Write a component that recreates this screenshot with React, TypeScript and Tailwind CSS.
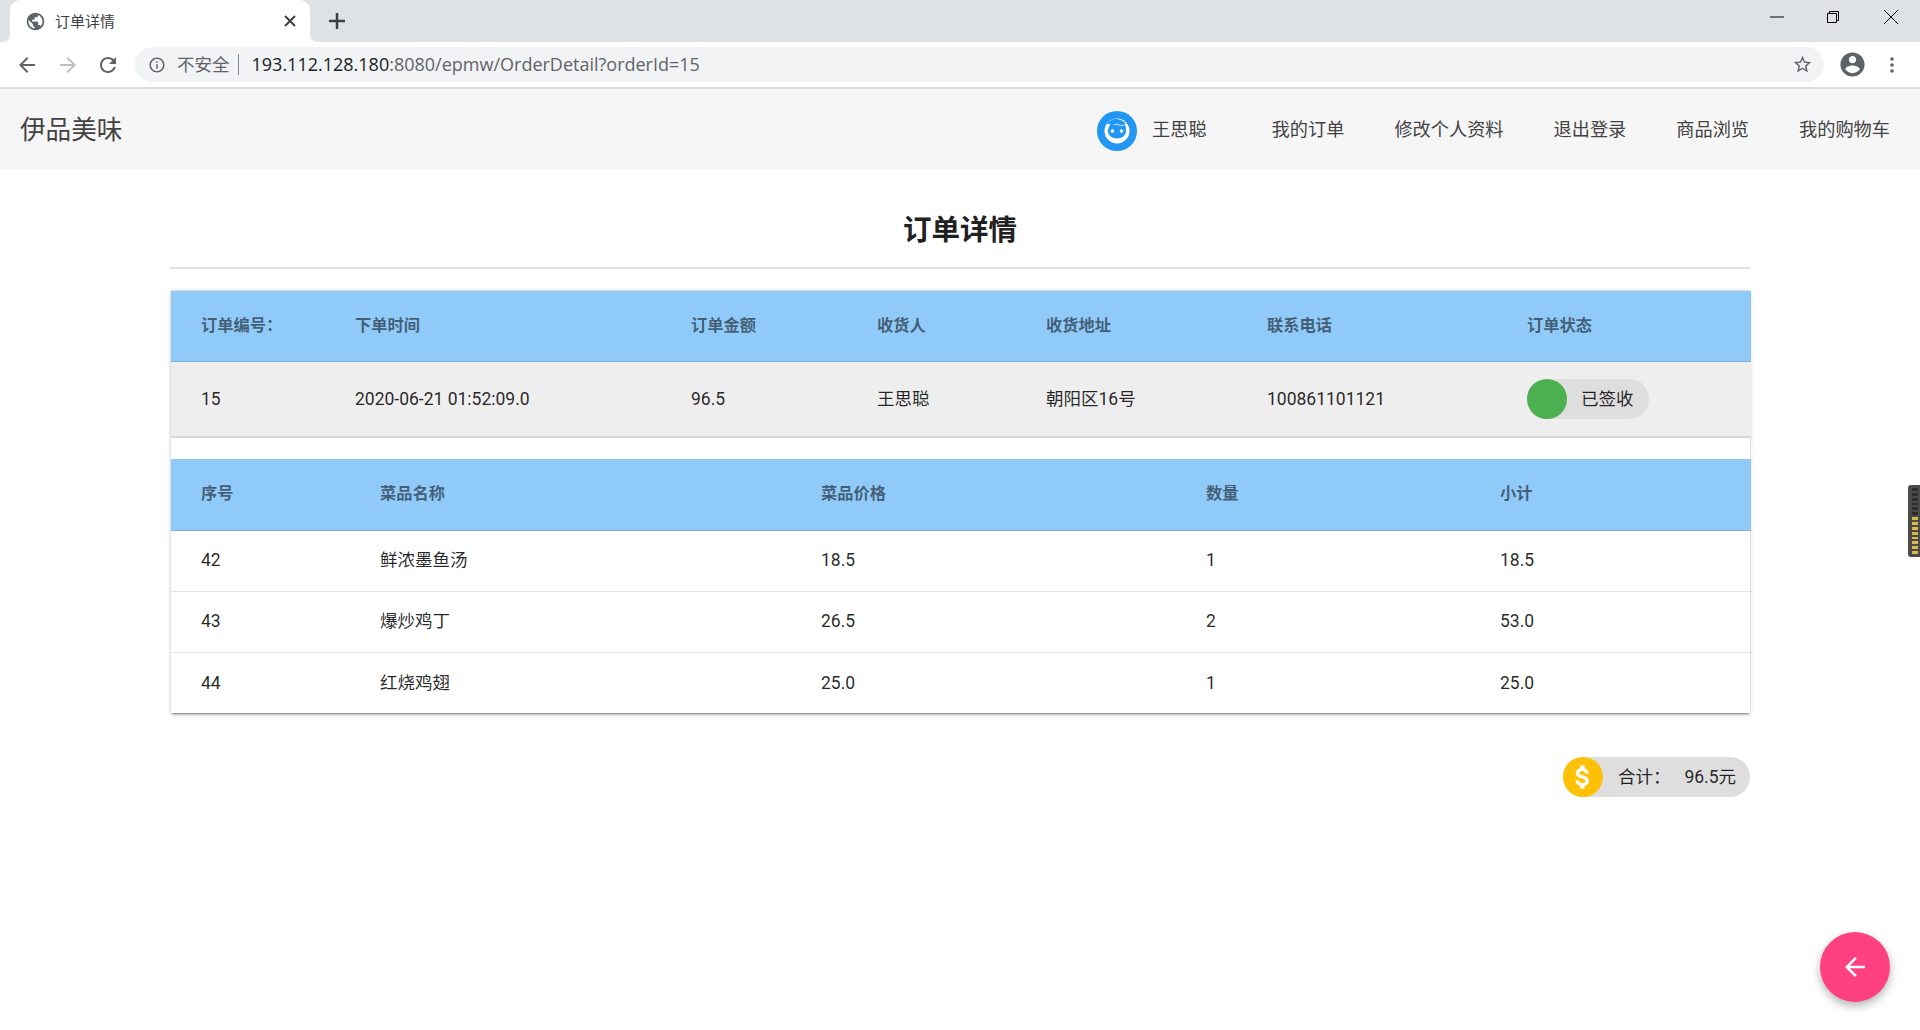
import React from 'react';

const BACK = 'M20 11H7.83l5.59-5.59L12 4l-8 8 8 8 1.41-1.41L7.83 13H20v-2z';
const RELOAD = 'M17.65 6.35C16.2 4.9 14.21 4 12 4c-4.42 0-7.99 3.58-7.99 8s3.57 8 7.99 8c3.73 0 6.84-2.55 7.73-6h-2.08c-.82 2.33-3.04 4-5.65 4-3.31 0-6-2.69-6-6s2.69-6 6-6c1.66 0 3.14.69 4.22 1.78L13 11h7V4l-2.35 2.35z';
const INFO = 'M11 7h2v2h-2zm0 4h2v6h-2zm1-9C6.48 2 2 6.48 2 12s4.48 10 10 10 10-4.48 10-10S17.52 2 12 2zm0 18c-4.41 0-8-3.59-8-8s3.59-8 8-8 8 3.59 8 8-3.59 8-8 8z';
const STAR = 'M22 9.24l-7.19-.62L12 2 9.19 8.63 2 9.24l5.46 4.73L5.82 21 12 17.27 18.18 21l-1.63-7.03L22 9.24zM12 15.4l-3.76 2.27 1-4.28-3.32-2.88 4.38-.38L12 6.1l1.71 4.04 4.38.38-3.32 2.88 1 4.28L12 15.4z';
const ACCOUNT = 'M12 2C6.48 2 2 6.48 2 12s4.48 10 10 10 10-4.48 10-10S17.52 2 12 2zm0 3c1.66 0 3 1.34 3 3s-1.34 3-3 3-3-1.34-3-3 1.34-3 3-3zm0 14.2c-2.5 0-4.71-1.28-6-3.22.03-1.99 4-3.08 6-3.08 1.99 0 5.97 1.09 6 3.08-1.29 1.94-3.5 3.22-6 3.22z';
const GLOBE = 'M12 2C6.48 2 2 6.48 2 12s4.48 10 10 10 10-4.48 10-10S17.52 2 12 2zm-1 17.93c-3.95-.49-7-3.85-7-7.93 0-.62.08-1.21.21-1.79L9 15v1c0 1.1.9 2 2 2v1.93zm6.9-2.54c-.26-.81-1-1.39-1.9-1.39h-1v-3c0-.55-.45-1-1-1H8v-2h2c.55 0 1-.45 1-1V7h2c1.1 0 2-.9 2-2v-.41c2.93 1.19 5 4.06 5 7.41 0 2.08-.8 3.97-2.1 5.39z';
const DOLLAR = 'M11.8 10.9c-2.27-.59-3-1.2-3-2.15 0-1.09 1.01-1.85 2.7-1.85 1.78 0 2.44.85 2.5 2.1h2.21c-.07-1.72-1.12-3.3-3.21-3.81V3h-3v2.16c-1.94.42-3.5 1.68-3.5 3.61 0 2.31 1.91 3.46 4.7 4.13 2.5.6 3 1.48 3 2.41 0 .69-.49 1.79-2.7 1.79-2.06 0-2.87-.92-2.98-2.1h-2.2c.12 2.19 1.76 3.42 3.68 3.83V21h3v-2.15c1.95-.37 3.5-1.5 3.5-3.55 0-2.84-2.43-3.81-4.7-4.4z';

function Icon({ d, className }: { d: string; className: string }) {
  return (
    <svg viewBox="0 0 24 24" className={className} fill="currentColor">
      <path d={d} />
    </svg>
  );
}

const orderHead = ['订单编号：', '下单时间', '订单金额', '收货人', '收货地址', '联系电话', '订单状态'];
const orderCols = ['w-[154px]', 'w-[336px]', 'w-[186px]', 'w-[169px]', 'w-[221px]', 'w-[260px]', 'w-[254px]'];
const itemHead = ['序号', '菜品名称', '菜品价格', '数量', '小计'];
const itemCols = ['w-[179px]', 'w-[441px]', 'w-[385px]', 'w-[294px]', 'w-[281px]'];
const items = [
  ['42', '鲜浓墨鱼汤', '18.5', '1', '18.5'],
  ['43', '爆炒鸡丁', '26.5', '2', '53.0'],
  ['44', '红烧鸡翅', '25.0', '1', '25.0'],
];

function BrowserChrome() {
  return (
    <div className="font-['Open_Sans','Noto_Sans_CJK_SC',sans-serif]">
      <div className="flex h-[42px] items-stretch bg-[#dee1e6]">
        <div className="relative ml-[10px] flex w-[300px] items-center rounded-t-[10px] bg-white pl-[15px] pr-[12px]">
          <span className="absolute bottom-0 left-[-8px] h-2 w-2 bg-white">
            <span className="block h-2 w-2 rounded-br-[8px] bg-[#dee1e6]" />
          </span>
          <span className="absolute bottom-0 right-[-8px] h-2 w-2 bg-white">
            <span className="block h-2 w-2 rounded-bl-[8px] bg-[#dee1e6]" />
          </span>
          <Icon d={GLOBE} className="h-[21px] w-[21px] text-[#5f6368]" />
          <span className="ml-[9px] flex-1 text-[15px] text-[#3c4043]">订单详情</span>
          <svg viewBox="0 0 12 12" className="mr-[2px] h-3 w-3 text-[#3c4043]" stroke="currentColor" strokeWidth="2">
            <path d="M1 1l10 10M11 1L1 11" />
          </svg>
        </div>
        <div className="ml-[19px] flex items-center">
          <svg viewBox="0 0 16 16" className="h-4 w-4 text-[#3c4043]" stroke="currentColor" strokeWidth="2.5">
            <path d="M8 0v16M0 8h16" />
          </svg>
        </div>
        <div className="ml-auto flex items-center pr-[22px] text-black">
          <svg viewBox="0 0 14 14" className="mr-[42px] mb-[8px] h-[14px] w-[14px]" stroke="currentColor" strokeWidth="1">
            <path d="M0 7h14" />
          </svg>
          <svg viewBox="0 0 14 14" className="mr-[44px] mb-[8px] h-[14px] w-[14px]" fill="none" stroke="currentColor" strokeWidth="1">
            <path d="M1.5 3.5h9v9h-9zM3.5 3.5v-2h9v9h-2" />
          </svg>
          <svg viewBox="0 0 14 14" className="mb-[8px] h-[14px] w-[14px]" stroke="currentColor" strokeWidth="1">
            <path d="M0 0l14 14M14 0L0 14" />
          </svg>
        </div>
      </div>
      <div className="flex h-[45px] items-center bg-white pl-[15px]">
        <Icon d={BACK} className="h-6 w-6 text-[#5f6368]" />
        <Icon d={BACK} className="ml-[17px] h-6 w-6 rotate-180 text-[#bdc1c6]" />
        <Icon d={RELOAD} className="ml-[16px] h-6 w-6 text-[#5f6368]" />
        <div className="ml-[15px] flex h-[35px] w-[1689px] items-center rounded-full bg-[#f1f3f4] pl-[13px] pr-[11px] text-[18px]">
          <Icon d={INFO} className="h-[18px] w-[18px] text-[#5f6368]" />
          <span className="ml-[11px] text-[17.5px] text-[#5f6368]">不安全</span>
          <span className="ml-[8px] h-[21px] w-px bg-[#80868b]" />
          <span className="ml-[13px] flex-1 text-[#202124]">
            193.112.128.180<span className="text-[#5f6368]">:8080/epmw/OrderDetail?orderId=15</span>
          </span>
          <Icon d={STAR} className="h-[21px] w-[21px] text-[#5f6368]" />
        </div>
        <Icon d={ACCOUNT} className="ml-[14px] h-[29px] w-[29px] text-[#5f6368]" />
        <svg viewBox="0 0 4 16" className="ml-[23px] h-4 w-1 text-[#5f6368]" fill="currentColor">
          <circle cx="2" cy="2" r="1.8" />
          <circle cx="2" cy="8" r="1.8" />
          <circle cx="2" cy="14" r="1.8" />
        </svg>
      </div>
      <div className="h-[2px] bg-[#dadce0]" />
    </div>
  );
}

function UserAvatar() {
  return (
    <svg viewBox="0 0 40 40" className="mt-1 h-10 w-10">
      <circle cx="20" cy="20" r="20" fill="#2196f3" />
      <circle cx="20" cy="20" r="12.500" fill="#fff" />
      <path d="M10 12.500c3-3.500 6-5 10-4.500 4 .5 7 2.500 9 5-3 1.500-6 1.500-9-.5-2 2-6 1.500-10 0z" fill="#2196f3" />
      <path d="M11 21c0-4 1-7 4-8 2 1.500 3.500 1.500 5 .5 3 1.500 6 1.500 8 .5 1 2 1 4 1 7a9 6.500 0 0 1-18 0z" fill="#2196f3" />
      <circle cx="15.500" cy="20" r="1.800" fill="#fff" />
      <circle cx="24.500" cy="20" r="1.800" fill="#fff" />
    </svg>
  );
}

function TopNav() {
  const links = ['我的订单', '修改个人资料', '退出登录', '商品浏览', '我的购物车'];
  return (
    <header className="flex h-[80px] items-center bg-[#f6f6f6] pl-[20px] pr-[30px] text-[#424242]">
      <div className="pt-[4px] text-[25.6px] leading-none">伊品美味</div>
      <div className="ml-auto flex items-center">
        <UserAvatar />
        <span className="ml-[15px] mr-[65px] pt-[2px] text-[18.2px]">王思聪</span>
        <nav className="flex gap-[50px] pt-[2px] text-[18.2px]">
          {links.map((l) => (
            <span key={l}>{l}</span>
          ))}
        </nav>
      </div>
    </header>
  );
}

function OrderCard() {
  return (
    <div className="ml-px border-t border-[#dddddd] bg-white shadow-[0_2px_2px_0_rgba(0,0,0,0.16),0_3px_1px_-2px_rgba(0,0,0,0.24),0_1px_5px_0_rgba(0,0,0,0.14)]">
      <table className="w-full table-fixed border-collapse">
        <thead>
          <tr className="h-[70px] border-b border-[#7fb3dd] bg-[#90caf9] text-left text-[16.25px] text-black/55">
            {orderHead.map((h, i) => (
              <th key={h} className={`${orderCols[i]} pl-[30px] font-bold`}>
                {h}
              </th>
            ))}
          </tr>
        </thead>
        <tbody>
          <tr className="h-[76px] border-b-2 border-[#d6d6d6] bg-[#eeeeee] text-[17.5px] text-black/85">
            <td className="pl-[30px]">15</td>
            <td className="pl-[30px]">2020-06-21 01:52:09.0</td>
            <td className="pl-[30px]">96.5</td>
            <td className="pl-[30px]">王思聪</td>
            <td className="pl-[30px]">朝阳区16号</td>
            <td className="pl-[30px]">100861101121</td>
            <td className="pl-[30px]">
              <span className="flex h-10 w-[122px] items-center rounded-full bg-[#dedede]">
                <span className="h-10 w-10 rounded-full bg-[#4caf50]" />
                <span className="ml-[14px]">已签收</span>
              </span>
            </td>
          </tr>
        </tbody>
      </table>
      <table className="mt-[21px] w-full table-fixed border-collapse">
        <thead>
          <tr className="h-[71px] border-b border-[#7fb3dd] bg-[#90caf9] text-left text-[16.25px] text-black/55">
            {itemHead.map((h, i) => (
              <th key={h} className={`${itemCols[i]} pl-[30px] font-bold`}>
                {h}
              </th>
            ))}
          </tr>
        </thead>
        <tbody className="text-[17.5px] text-black/85">
          {items.map((row, r) => (
            <tr key={row[0]} className={r < 2 ? 'h-[61px] border-b border-black/10' : 'h-[61px]'}>
              {row.map((c, i) => (
                <td key={i} className="pl-[30px]">
                  {c}
                </td>
              ))}
            </tr>
          ))}
        </tbody>
      </table>
    </div>
  );
}

export default function App() {
  return (
    <div className="relative h-[1030px] overflow-hidden bg-white font-['Roboto','Noto_Sans_CJK_SC',sans-serif]">
      <BrowserChrome />
      <TopNav />
      <main className="mx-auto w-[1580px]">
        <div className="flex h-[100px] items-center justify-center border-b-2 border-[#e0e0e0] pt-[27px]">
          <h1 className="text-[28.5px] font-bold text-[#212121]">订单详情</h1>
        </div>
        <div className="mt-[21px]">
          <OrderCard />
        </div>
        <div className="mt-[44px] flex justify-end">
          <div className="flex h-10 w-[187px] items-center rounded-full bg-[#dedede] text-[17.5px] text-black/85">
            <span className="flex h-10 w-10 items-center justify-center rounded-full bg-[#ffc107]">
              <svg viewBox="0 0 24 24" className="h-[30px] w-[30px] text-white" fill="currentColor" stroke="currentColor" strokeWidth="0.6">
                <path d={DOLLAR} />
              </svg>
            </span>
            <span className="ml-[15px] pt-px">合计：</span>
            <span className="ml-auto pr-[14px] pt-px">96.5元</span>
          </div>
        </div>
      </main>

      {/* 返回按钮 */}
      <button className="absolute left-[1820px] top-[932px] flex h-[70px] w-[70px] items-center justify-center rounded-full bg-[#ff4081] text-white shadow-[0_4px_10px_rgba(0,0,0,0.3)]">
        <Icon d={BACK} className="h-[30px] w-[30px]" />
      </button>

      {/* 页面右侧的小挂件 */}
      <div className="absolute left-[1908px] top-[485px] flex h-[72px] w-[12px] flex-col gap-[2px] rounded-l-[3px] bg-[#4a4a4a] py-[3px] pl-[4px]">
        {Array.from({ length: 14 }).map((_, i) => (
          <span key={i} className={i < 6 ? 'h-[3px] w-[6px] bg-[#2e2e2e]' : 'h-[3px] w-[6px] bg-[#d9b948]'} />
        ))}
      </div>
    </div>
  );
}
